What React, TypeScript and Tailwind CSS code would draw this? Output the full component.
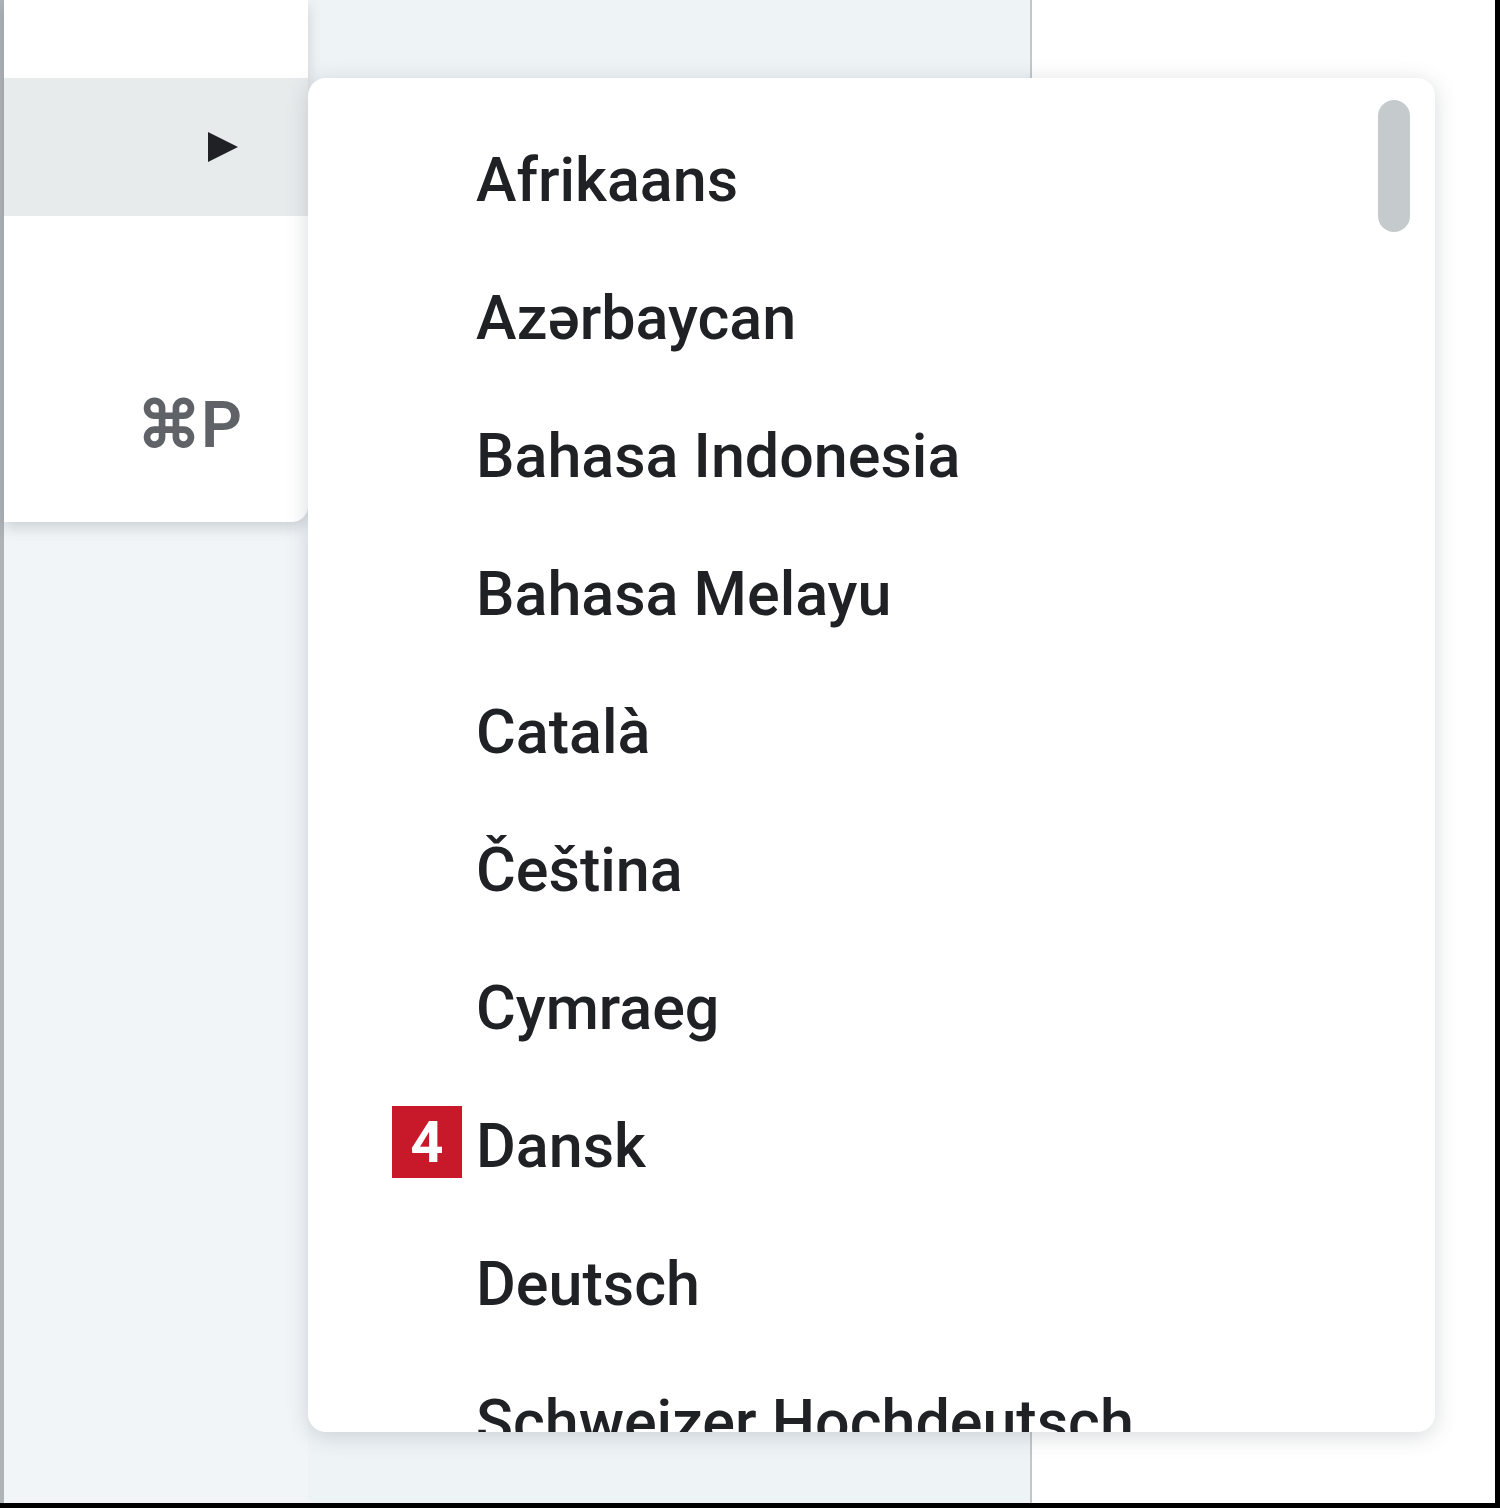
const languages = [
  "Afrikaans",
  "Azərbaycan",
  "Bahasa Indonesia",
  "Bahasa Melayu",
  "Català",
  "Čeština",
  "Cymraeg",
  "Dansk",
  "Deutsch",
  "Schweizer Hochdeutsch",
];

function LanguageRow({ name, badge }: { name: string; badge?: string }) {
  return (
    <div className="flex items-center h-[138px] shrink-0 pl-[84px] gap-[14px]">
      <div className="w-[70px] flex justify-center">
        {badge && (
          <div className="w-[70px] h-[72px] mb-[8px] bg-[#c8192b] text-white flex items-center justify-center text-[58px] font-bold leading-none">
            {badge}
          </div>
        )}
      </div>
      <span className="text-[61px] font-medium text-[#202124] whitespace-nowrap leading-none">{name}</span>
    </div>
  );
}

export default function App() {
  return (
    <div className="relative w-[1500px] h-[1508px] overflow-hidden bg-black font-['Roboto',sans-serif]">
      {/* page behind the menus */}
      <div className="flex w-[1495px] h-[1503px]">
        <div className="w-[4px] bg-[#aeb3b6]" />
        <div className="w-[304px] bg-[#f1f5f8]" />
        <div className="w-[722px] bg-[#eef3f6]" />
        <div className="w-[2px] bg-[#c3c7ca]" />
        <div className="flex-1 bg-white" />
      </div>

      {/* parent context menu */}
      <div className="absolute left-[4px] top-0 w-[304px] h-[522px] bg-white rounded-br-[16px] shadow-[0_6px_14px_rgba(60,70,80,0.2)] flex flex-col">
        <div className="h-[78px]" />
        <div className="h-[138px] bg-[#e8ebec] flex items-center justify-end pr-[68px]">
          <svg width="34" height="34" viewBox="0 0 34 34">
            <polygon points="2,2 32,17 2,32" fill="#202124" />
          </svg>
        </div>
        <div className="h-[138px]" />
        <div className="h-[138px] flex items-center justify-end pr-[66px] pt-[6px]">
          <span className="text-[64px] font-semibold text-[#5f6368] leading-none">⌘P</span>
        </div>
      </div>

      {/* language submenu */}
      <div className="absolute left-[308px] top-[78px] w-[1127px] h-[1354px] bg-white rounded-[18px] shadow-[0_4px_22px_rgba(60,70,80,0.2)] overflow-hidden">
        <div className="flex flex-col pt-[33px]">
          {languages.map((l) => (
            <LanguageRow key={l} name={l} badge={l === "Dansk" ? "4" : undefined} />
          ))}
        </div>
        <div className="absolute right-[25px] top-[22px] w-[32px] h-[132px] rounded-full bg-[#c5cacd]" />
      </div>
    </div>
  );
}
